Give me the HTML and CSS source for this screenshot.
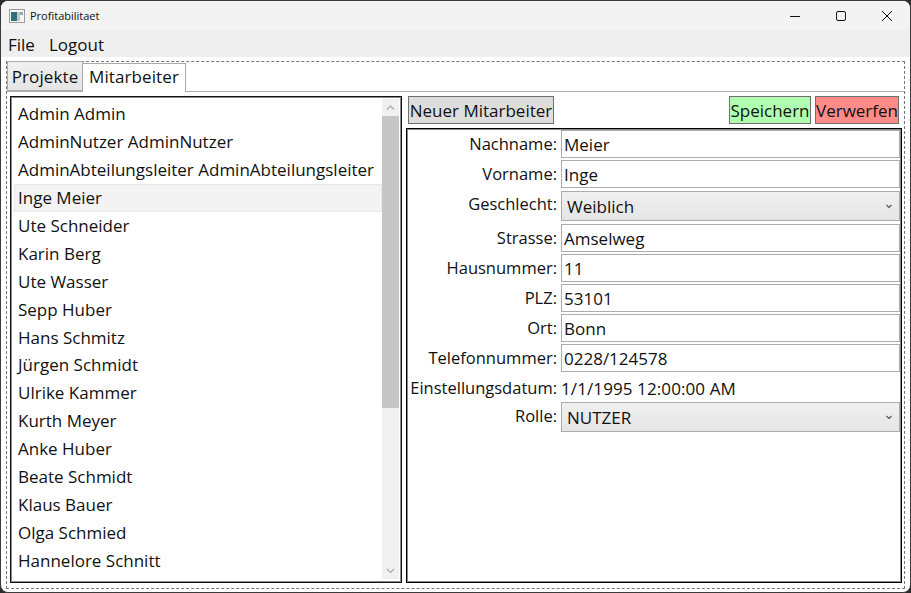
FILE: index.html
```html
<!DOCTYPE html>
<html lang="en">
	<head>
		<meta charset="UTF-8" />
		<title>Profitabilitaet</title>
		<link rel="stylesheet" href="styles.css">
	</head>
	<body>
		<div class="window">
			<div class="titlebar">
				<svg class="appicon" width="16" height="14" viewBox="0 0 16 14">
					<rect x="0.5" y="0.5" width="15" height="13" fill="#f4f4f4" stroke="#9a9a9a" />
					<rect x="2" y="3" width="6" height="9" fill="#2f6f77" />
					<rect x="8" y="3" width="3" height="9" fill="#b9c9cc" />
					<rect x="11" y="3" width="3" height="3" fill="#8fa9b0" />
				</svg>
				<span class="title">Profitabilitaet</span>
				<div class="caption">
					<svg width="46" height="30" viewBox="0 0 46 30"><path d="M18 15.5h10" stroke="#111" fill="none" /></svg>
					<svg width="46" height="30" viewBox="0 0 46 30"><rect x="18.5" y="10.5" width="9" height="9" rx="1.5" stroke="#111" fill="none" /></svg>
					<svg width="46" height="30" viewBox="0 0 46 30"><path d="M18 10l10 10M28 10l-10 10" stroke="#111" fill="none" /></svg>
				</div>
			</div>
			<div class="menubar">
				<span>File</span>
				<span>Logout</span>
			</div>
			<div class="tabcontrol">
				<div class="tabs">
					<div class="tab">Projekte</div>
					<div class="tab active">Mitarbeiter</div>
				</div>
				<div class="tabpanel">
					<div class="listbox">
						<ul class="items">
							<li>Admin Admin</li>
							<li>AdminNutzer AdminNutzer</li>
							<li>AdminAbteilungsleiter AdminAbteilungsleiter</li>
							<li class="selected">Inge Meier</li>
							<li>Ute Schneider</li>
							<li>Karin Berg</li>
							<li>Ute Wasser</li>
							<li>Sepp Huber</li>
							<li>Hans Schmitz</li>
							<li>Jürgen Schmidt</li>
							<li>Ulrike Kammer</li>
							<li>Kurth Meyer</li>
							<li>Anke Huber</li>
							<li>Beate Schmidt</li>
							<li>Klaus Bauer</li>
							<li>Olga Schmied</li>
							<li>Hannelore Schnitt</li>
						</ul>
						<div class="scrollbar">
							<svg width="17" height="17" viewBox="0 0 17 17"><path d="M5 10.500l3.500-3.500 3.500 3.500" stroke="#a8a8a8" stroke-width="1.200" fill="none" /></svg>
							<div class="thumb"></div>
							<svg width="17" height="17" viewBox="0 0 17 17"><path d="M5 7l3.500 3.500 3.500-3.500" stroke="#a8a8a8" stroke-width="1.200" fill="none" /></svg>
						</div>
					</div>
					<div class="detail">
						<div class="actions">
							<button class="btn">Neuer Mitarbeiter</button>
							<div class="spacer"></div>
							<button class="btn save">Speichern</button>
							<button class="btn discard">Verwerfen</button>
						</div>
						<form class="fields">
							<label>Nachname:</label><input type="text" value="Meier" />
							<label>Vorname:</label><input type="text" value="Inge" />
							<label>Geschlecht:</label>
							<div class="combo"><span>Weiblich</span><svg width="6" height="5" viewBox="0 0 6 5"><path d="M0.500 1l2.500 2.500 2.500-2.500" stroke="#555" stroke-width="1.200" fill="none" /></svg></div>
							<label>Strasse:</label><input type="text" value="Amselweg" />
							<label>Hausnummer:</label><input type="text" value="11" />
							<label>PLZ:</label><input type="text" value="53101" />
							<label>Ort:</label><input type="text" value="Bonn" />
							<label>Telefonnummer:</label><input type="text" value="0228/124578" />
							<label>Einstellungsdatum:</label><div class="plain">1/1/1995 12:00:00 AM</div>
							<label>Rolle:</label>
							<div class="combo last"><span>NUTZER</span><svg width="6" height="5" viewBox="0 0 6 5"><path d="M0.500 1l2.500 2.500 2.500-2.500" stroke="#555" stroke-width="1.200" fill="none" /></svg></div>
						</form>
					</div>
				</div>
			</div>
		</div>
	</body>
</html>
```

FILE: styles.css
```css
html,
body {
	margin: 0;
	padding: 0;
	background: #2b2b2b;
}

body {
	font: 17px "Open Sans", sans-serif;
	color: #111;
}

.window {
	width: 909px;
	height: 591px;
	border: 1px solid #3a3a3a;
	border-radius: 8px;
	background: #fff;
	display: flex;
	flex-direction: column;
	overflow: hidden;
}

.titlebar {
	height: 29px;
	flex: none;
	background: #f3f3f3;
	display: flex;
	align-items: center;
	padding-left: 8px;
}

.title {
	font-size: 11px;
	margin-left: 5px;
}

.caption {
	margin-left: auto;
	display: flex;
}

.menubar {
	height: 27px;
	flex: none;
	background: #efefef;
	display: flex;
	align-items: center;
	gap: 14px;
	padding: 1px 0 0 7px;
	box-sizing: border-box;
}

.tabcontrol {
	flex: 1;
	margin: 4px 5px 3px 5px;
	border: 1px dashed #777;
	display: flex;
	flex-direction: column;
	min-height: 0;
}

.tabs {
	height: 29px;
	flex: none;
	display: flex;
	align-items: flex-end;
}

.tab {
	height: 28px;
	width: 74px;
	background: linear-gradient(#f0f0f0, #e5e5e5);
	border: 1px solid #acacac;
	line-height: 30px;
	text-align: center;
	letter-spacing: 0.1px;
}

.tab.active {
	height: 28px;
	width: 102px;
	background: #fff;
	border-left: 0;
	border-bottom: 0;
	line-height: 26px;
	position: relative;
	top: 1px;
}

.tabpanel {
	flex: 1;
	border-top: 1px solid #acacac;
	display: flex;
	padding: 4px 2px 5px 3px;
	min-height: 0;
	gap: 4px;
}

.listbox {
	width: 385px;
	flex: none;
	border: 1px solid #111;
	box-shadow: inset 0 0 0 1px #8a8a8a;
	padding: 2px 2px 3px 3px;
	display: flex;
}

.items {
	list-style: none;
	margin: 1px 0 0;
	padding: 0;
	flex: 1;
	overflow: hidden;
}

.items li {
	height: 27.94px;
	line-height: 28px;
	padding-left: 4px;
	white-space: nowrap;
}

.items li.selected {
	background: #f3f3f3;
	box-shadow: inset 0 0 0 1px #e8e8e8;
}

.scrollbar {
	width: 17px;
	flex: none;
	background: #f0f0f0;
	display: flex;
	flex-direction: column;
}

.thumb {
	height: 292px;
	background: #c6c6c6;
}

.scrollbar svg:last-child {
	margin-top: auto;
}

.detail {
	flex: 1;
	display: flex;
	flex-direction: column;
	min-width: 0;
}

.actions {
	display: flex;
	gap: 4px;
	padding: 0 3px 0 2px;
	height: 28px;
}

.spacer {
	flex: 1;
}

.btn {
	font: inherit;
	color: inherit;
	padding: 0;
	height: 28px;
	border: 1px solid #707070;
	background: #dddddd;
}

.btn:first-child {
	width: 146px;
}

.save {
	width: 82px;
	background: #b0ffb0;
}

.discard {
	width: 84px;
	background: #ff8a8a;
}

.fields {
	flex: 1;
	margin-top: 4px;
	border: 1px solid #000;
	box-shadow: inset 0 0 0 1px #8a8a8a;
	padding: 1px;
	display: grid;
	grid-template-columns: 149px 1fr;
	column-gap: 4px;
	align-content: start;
}

.fields label {
	font-size: 16.5px;
	text-align: right;
	line-height: 28px;
}

.fields input {
	font: inherit;
	color: inherit;
	height: 28px;
	margin-bottom: 2px;
	padding: 0 2px;
	box-sizing: border-box;
	border: 1px solid #acacac;
	width: 100%;
	outline: 0;
}

.plain {
	height: 28px;
	line-height: 30px;
	letter-spacing: 0.1px;
}

.combo {
	height: 30px;
	margin: 1px 0 3px;
	box-sizing: border-box;
	border: 1px solid #acacac;
	background: linear-gradient(#f0f0f0, #e5e5e5);
	display: flex;
	align-items: center;
	justify-content: space-between;
	padding: 0 7px 0 5px;
}

.combo.last {
	margin-top: 0;
}
```
